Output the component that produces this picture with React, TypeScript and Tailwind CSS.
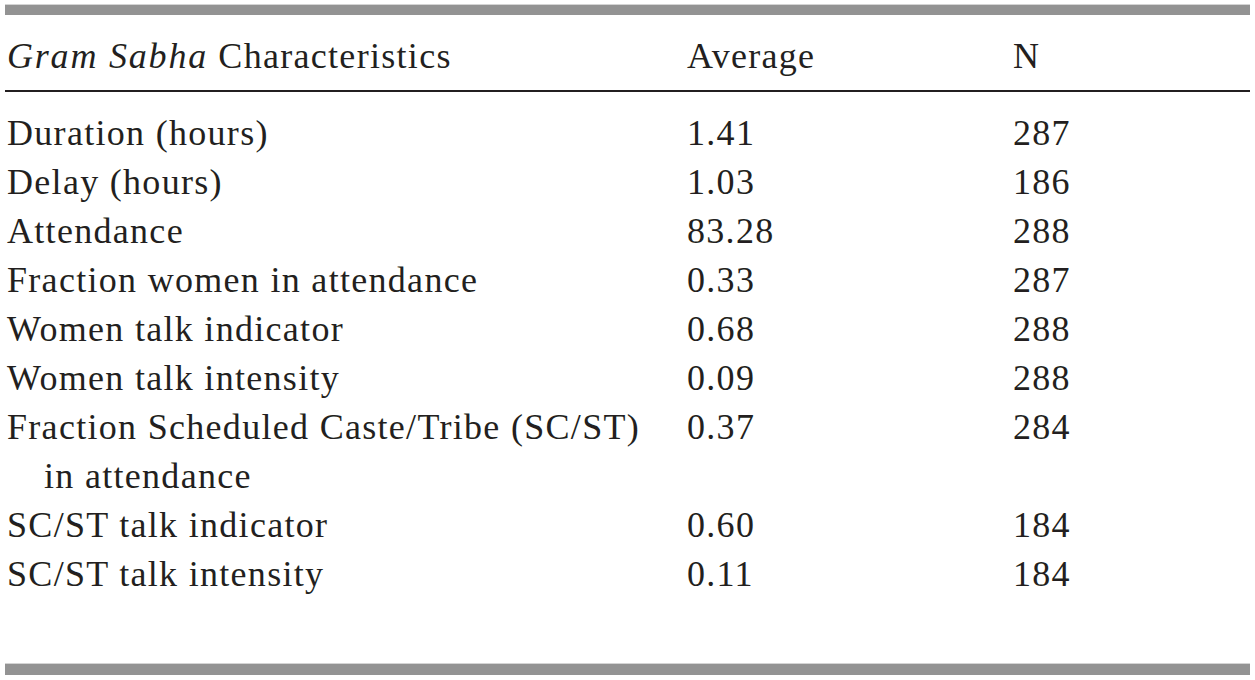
const rows: { label: string; cont?: string; avg: string; n: string }[] = [
  { label: 'Duration (hours)', avg: '1.41', n: '287' },
  { label: 'Delay (hours)', avg: '1.03', n: '186' },
  { label: 'Attendance', avg: '83.28', n: '288' },
  { label: 'Fraction women in attendance', avg: '0.33', n: '287' },
  { label: 'Women talk indicator', avg: '0.68', n: '288' },
  { label: 'Women talk intensity', avg: '0.09', n: '288' },
  { label: 'Fraction Scheduled Caste/Tribe (SC/ST)', cont: 'in attendance', avg: '0.37', n: '284' },
  { label: 'SC/ST talk indicator', avg: '0.60', n: '184' },
  { label: 'SC/ST talk intensity', avg: '0.11', n: '184' },
]

export default function App() {
  return (
    <div
      className="w-[1255px] h-[680px] bg-white px-[5px] pt-[4px] text-[#231f20] text-[36px] leading-[49px] tracking-[1.3px]"
      style={{ fontFamily: '"Liberation Serif", "Times New Roman", serif' }}
    >
      <div className="h-[11px] border-t border-[#d4d4d4] bg-[#939393]" />
      <div className="grid grid-cols-[680px_326px_1fr] pl-[2px] pt-[17px] pb-[9px]">
        <div><i className="tracking-[1.8px]">Gram Sabha</i> Characteristics</div>
        <div>Average</div>
        <div>N</div>
      </div>
      <div className="h-[2px] bg-[#231f20]" />
      <div className="pt-[17px] h-[571px]">
        {rows.map(r => (
          <div key={r.label} className="grid grid-cols-[680px_326px_1fr] pl-[2px]">
            <div>
              <div>{r.label}</div>
              {r.cont && <div className="pl-[37px]">{r.cont}</div>}
            </div>
            <div>{r.avg}</div>
            <div>{r.n}</div>
          </div>
        ))}
      </div>
      <div className="h-[12px] border-t border-[#d4d4d4] bg-[#939393]" />
    </div>
  )
}
